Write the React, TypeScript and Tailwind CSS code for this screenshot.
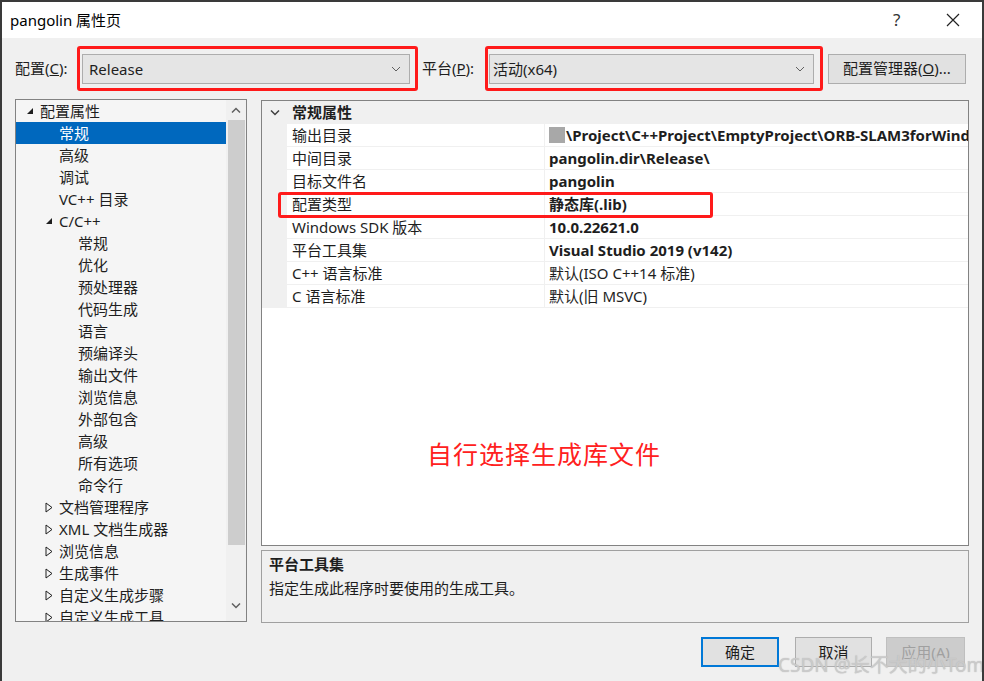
import React from 'react';

const font = { fontFamily: '"Noto Sans", "Noto Sans CJK SC", sans-serif' };

type Node = { label: string; level: number; arrow?: 'open' | 'closed'; selected?: boolean };

const tree: Node[] = [
  { label: '配置属性', level: 0, arrow: 'open' },
  { label: '常规', level: 1, selected: true },
  { label: '高级', level: 1 },
  { label: '调试', level: 1 },
  { label: 'VC++ 目录', level: 1 },
  { label: 'C/C++', level: 1, arrow: 'open' },
  { label: '常规', level: 2 },
  { label: '优化', level: 2 },
  { label: '预处理器', level: 2 },
  { label: '代码生成', level: 2 },
  { label: '语言', level: 2 },
  { label: '预编译头', level: 2 },
  { label: '输出文件', level: 2 },
  { label: '浏览信息', level: 2 },
  { label: '外部包含', level: 2 },
  { label: '高级', level: 2 },
  { label: '所有选项', level: 2 },
  { label: '命令行', level: 2 },
  { label: '文档管理程序', level: 1, arrow: 'closed' },
  { label: 'XML 文档生成器', level: 1, arrow: 'closed' },
  { label: '浏览信息', level: 1, arrow: 'closed' },
  { label: '生成事件', level: 1, arrow: 'closed' },
  { label: '自定义生成步骤', level: 1, arrow: 'closed' },
  { label: '自定义生成工具', level: 1, arrow: 'closed' },
];

const props: { name: string; value: string; bold: boolean }[] = [
  { name: '输出目录', value: '\\Project\\C++Project\\EmptyProject\\ORB-SLAM3forWindows', bold: true },
  { name: '中间目录', value: 'pangolin.dir\\Release\\', bold: true },
  { name: '目标文件名', value: 'pangolin', bold: true },
  { name: '配置类型', value: '静态库(.lib)', bold: true },
  { name: 'Windows SDK 版本', value: '10.0.22621.0', bold: true },
  { name: '平台工具集', value: 'Visual Studio 2019 (v142)', bold: true },
  { name: 'C++ 语言标准', value: '默认(ISO C++14 标准)', bold: false },
  { name: 'C 语言标准', value: '默认(旧 MSVC)', bold: false },
];

const Chevron = () => (
  <svg width="10" height="6" viewBox="0 0 10 6" className="shrink-0">
    <path d="M1 1 L5 5 L9 1" fill="none" stroke="#606060" strokeWidth="1" />
  </svg>
);

const Arrow = ({ kind }: { kind: 'open' | 'closed' }) =>
  kind === 'open' ? (
    <svg width="8" height="8" viewBox="0 0 8 8">
      <path d="M7 1 L7 7 L1 7 Z" fill="#1e1e1e" />
    </svg>
  ) : (
    <svg width="8" height="11" viewBox="0 0 8 11">
      <path d="M1 1 L7 5.5 L1 10 Z" fill="none" stroke="#1e1e1e" strokeWidth="1" />
    </svg>
  );

export default function App() {
  return (
    <div
      className="relative w-[984px] h-[681px] bg-[#f0f0f0] text-[15px] text-[#1e1e1e] border-l-2 border-t-2 border-r-2 border-[#3a3a3a] overflow-hidden flex flex-col"
      style={font}
    >
      {/* title bar */}
      <div className="h-[36px] shrink-0 bg-white flex items-center pl-[8px]">
        <span className="flex-1 text-[15px] text-black">pangolin 属性页</span>
        <span className="w-[20px] text-[17px] text-[#333] mr-[33px]">?</span>
        <svg width="14" height="14" viewBox="0 0 14 14" className="mr-[22px]">
          <path d="M1 1 L13 13 M13 1 L1 13" stroke="#222" strokeWidth="1.2" />
        </svg>
      </div>

      {/* config row */}
      <div className="h-[61px] shrink-0 flex items-center pl-[13px]">
        <div className="w-[62px]">
          配置(<span className="underline">C</span>):
        </div>
        <div className="w-[341px] h-[45px] border-[3px] border-[#ff1a1a] rounded-[3px] pl-[2px] pr-[5px] pt-[5px] pb-[4px]">
          <div className="h-full bg-[#e5e5e5] border border-[#adadad] flex items-center pl-[6px] pr-[8px]">
            <span className="flex-1">Release</span>
            <Chevron />
          </div>
        </div>
        <div className="w-[67px] pl-[4px]">
          平台(<span className="underline">P</span>):
        </div>
        <div className="w-[338px] h-[45px] border-[3px] border-[#ff1a1a] rounded-[3px] pl-[1px] pr-[6px] pt-[5px] pb-[4px]">
          <div className="h-full bg-[#e5e5e5] border border-[#adadad] flex items-center pl-[3px] pr-[8px]">
            <span className="flex-1">活动(x64)</span>
            <Chevron />
          </div>
        </div>
        <div className="ml-[5px] w-[138px] h-[30px] bg-[#e1e1e1] border border-[#adadad] flex items-center justify-center">
          配置管理器(<span className="underline">O</span>)...
        </div>
      </div>

      {/* main area */}
      <div className="flex pl-[13px] gap-[14px]">
        {/* tree */}
        <div className="w-[232px] h-[523px] border border-[#828282] bg-[#f5f5f5] flex overflow-hidden">
          <div className="flex-1 flex flex-col">
            {tree.map((n, i) => (
              <div
                key={i}
                className={
                  'h-[22px] shrink-0 flex items-center relative ' +
                  (n.selected ? 'bg-[#0068be] text-white' : '')
                }
                style={{ paddingLeft: 24 + n.level * 19 }}
              >
                {n.arrow && (
                  <span className="absolute top-0 h-full flex items-center" style={{ left: 10 + n.level * 19 }}>
                    <Arrow kind={n.arrow} />
                  </span>
                )}
                <span className="whitespace-nowrap">{n.label}</span>
              </div>
            ))}
          </div>
          <div className="w-[20px] bg-[#f0f0f0] flex flex-col items-center">
            <div className="h-[20px] flex items-center justify-center">
              <svg width="10" height="6" viewBox="0 0 10 6">
                <path d="M1 5.5 L5 1.5 L9 5.5" fill="none" stroke="#606060" strokeWidth="1.5" />
              </svg>
            </div>
            <div className="w-[17px] h-[425px] bg-[#cdcdcd]" />
            <div className="flex-1" />
            <div className="h-[20px] flex items-center justify-center mb-[5px]">
              <svg width="10" height="6" viewBox="0 0 10 6">
                <path d="M1 0.5 L5 4.5 L9 0.5" fill="none" stroke="#606060" strokeWidth="1.5" />
              </svg>
            </div>
          </div>
        </div>

        {/* right column */}
        <div className="w-[708px] flex flex-col pt-[1px]">
          <div className="relative h-[446px] border border-[#828282] bg-white">
            <div className="h-[23px] bg-[#f0f0f0] flex items-center">
              <div className="w-[25px] flex justify-center">
                <svg width="10" height="6" viewBox="0 0 10 6">
                  <path d="M1 0.5 L5 4.5 L9 0.5" fill="none" stroke="#404040" strokeWidth="1.5" />
                </svg>
              </div>
              <span className="font-bold pl-[5px]">常规属性</span>
            </div>
            {props.map((p, i) => (
              <div key={i} className="h-[23px] flex">
                <div className="w-[25px] bg-[#f0f0f0]" />
                <div className="w-[258px] border-b border-r border-[#f0f0f0] flex items-center pl-[5px] whitespace-nowrap">
                  {p.name}
                </div>
                <div
                  className={
                    'flex-1 min-w-0 border-b border-[#f0f0f0] flex items-center pl-[4px] whitespace-nowrap overflow-hidden ' +
                    (p.bold ? 'font-bold' : '')
                  }
                >
                  {i === 0 && <span className="shrink-0 inline-block w-[16px] h-[16px] bg-[#a8a8a8] mr-[1px]" />}
                  <span className="shrink-0">{p.value}</span>
                </div>
              </div>
            ))}
            {/* annotation on config type row */}
            <div className="absolute left-[16px] top-[91px] w-[435px] h-[26px] border-[3px] border-[#ff1a1a] rounded-[3px]" />
            <div className="absolute left-[165px] top-[335px] text-[25px] text-[#ff2020] tracking-[1px]">
              自行选择生成库文件
            </div>
          </div>
          <div className="mt-[4px] h-[73px] border border-[#a0a0a0] bg-[#f0f0f0] px-[7px] pt-[2px]">
            <div className="font-bold leading-[22px]">平台工具集</div>
            <div className="leading-[22px] mt-[2px]">指定生成此程序时要使用的生成工具。</div>
          </div>
        </div>
      </div>

      {/* bottom buttons */}
      <div className="flex justify-end gap-[18px] pr-[17px] mt-[14px]">
        <div className="w-[78px] h-[30px] bg-[#e1e1e1] border-2 border-[#0078d7] flex items-center justify-center">
          确定
        </div>
        <div className="w-[77px] h-[30px] bg-[#e1e1e1] border border-[#adadad] flex items-center justify-center -ml-[2px]">
          取消
        </div>
        <div className="w-[79px] h-[30px] bg-[#cccccc] border border-[#bfbfbf] text-[#a0a0a0] flex items-center justify-center -ml-[4px]">
          应用(A)
        </div>
      </div>

      <div className="absolute left-[776px] top-[649px] text-[19px] text-[#d0d0d0]/80 whitespace-nowrap [text-shadow:0_0_1px_#b0b0b0]">
        CSDN @长不大的小Tom
      </div>
    </div>
  );
}
